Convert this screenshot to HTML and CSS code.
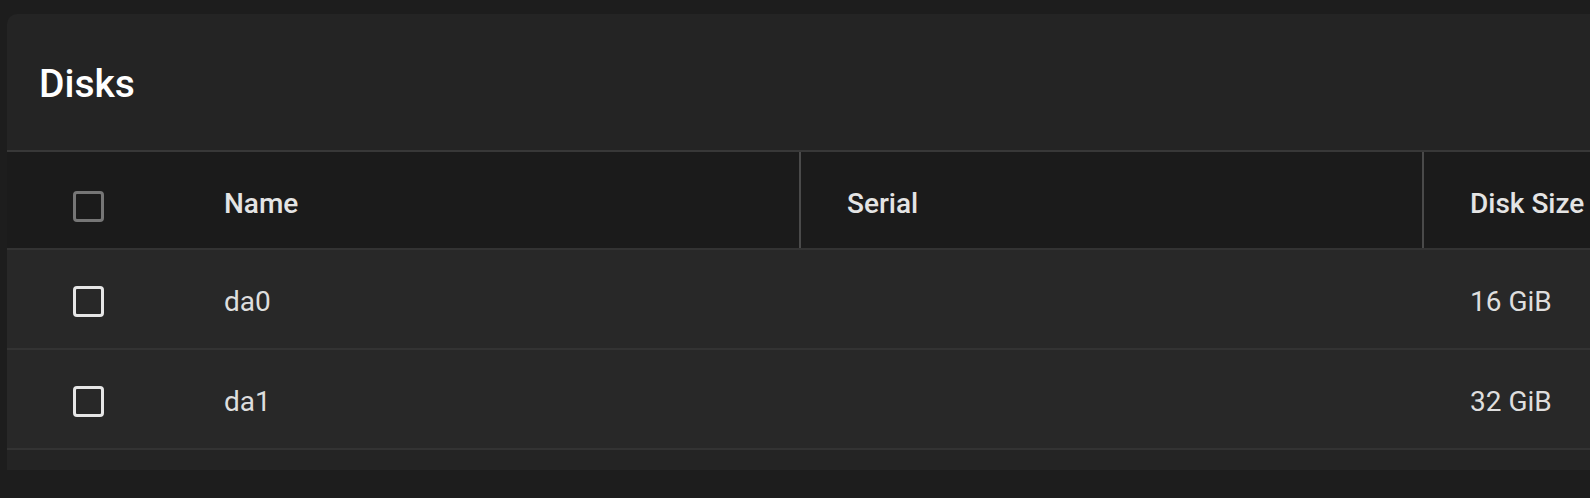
FILE: index.html
```html
<!DOCTYPE html>
<html lang="en">
<head>
  <meta charset="UTF-8">
  <meta name="viewport" content="width=device-width, initial-scale=1.0">
  <title>Disks</title>
  <link rel="stylesheet" href="styles.css">
</head>
<body>
  <div class="card">
    <div class="card-head">
      <h1 class="card-title">Disks</h1>
    </div>

    <div class="table">
      <div class="row head-row">
        <div class="cell check-cell"><span class="checkbox dim"></span></div>
        <div class="cell">Name</div>
        <div class="cell divided">Serial</div>
        <div class="cell divided">Disk Size</div>
      </div>
      <div class="row">
        <div class="cell check-cell"><span class="checkbox"></span></div>
        <div class="cell">da0</div>
        <div class="cell"></div>
        <div class="cell">16 GiB</div>
      </div>
      <div class="row">
        <div class="cell check-cell"><span class="checkbox"></span></div>
        <div class="cell">da1</div>
        <div class="cell"></div>
        <div class="cell">32 GiB</div>
      </div>
    </div>
    <div class="card-foot"></div>
  </div>
</body>
</html>
```

FILE: styles.css
```css
html, body {
  margin: 0;
  padding: 0;
  height: 100%;
  overflow: hidden;
}

body {
  background-color: #1d1d1d;
  font-family: Roboto, "Liberation Sans", sans-serif;
  padding: 14px 0 0 7px;
  box-sizing: border-box;
}

.card {
  width: 1800px;
  background-color: #242424;
  border-radius: 10px 0 0 0;
}

.card-head {
  height: 136px;
  display: flex;
  align-items: center;
  padding: 4px 0 0 32px;
  box-sizing: border-box;
}

.card-title {
  margin: 0;
  font-size: 39px;
  line-height: 39px;
  font-weight: 500;
  color: #ffffff;
}

.row {
  display: grid;
  grid-template-columns: 169px 623px 623px 1fr;
  height: 100px;
  border-bottom: 2px solid #333333;
  box-sizing: border-box;
  background-color: #282828;
  color: #dedede;
  font-size: 28px;
}

.head-row {
  border-top: 2px solid #383838;
  background-color: #1b1b1b;
  color: #e4e4e4;
  font-weight: 500;
}

.cell {
  display: flex;
  align-items: center;
  padding: 4px 0 0 48px;
}

.head-row .cell {
  padding-top: 7px;
}

.cell.divided {
  border-left: 2px solid #4a4a4a;
  padding-left: 46px;
}

.check-cell {
  padding-left: 66px;
}

.head-row .check-cell .checkbox {
  margin-top: 6px;
}

.checkbox {
  display: block;
  width: 25px;
  height: 25px;
  border: 3px solid #e6e6e6;
  border-radius: 4px;
}

.checkbox.dim {
  border-color: #767676;
}

.card-foot {
  height: 20px;
}
```
